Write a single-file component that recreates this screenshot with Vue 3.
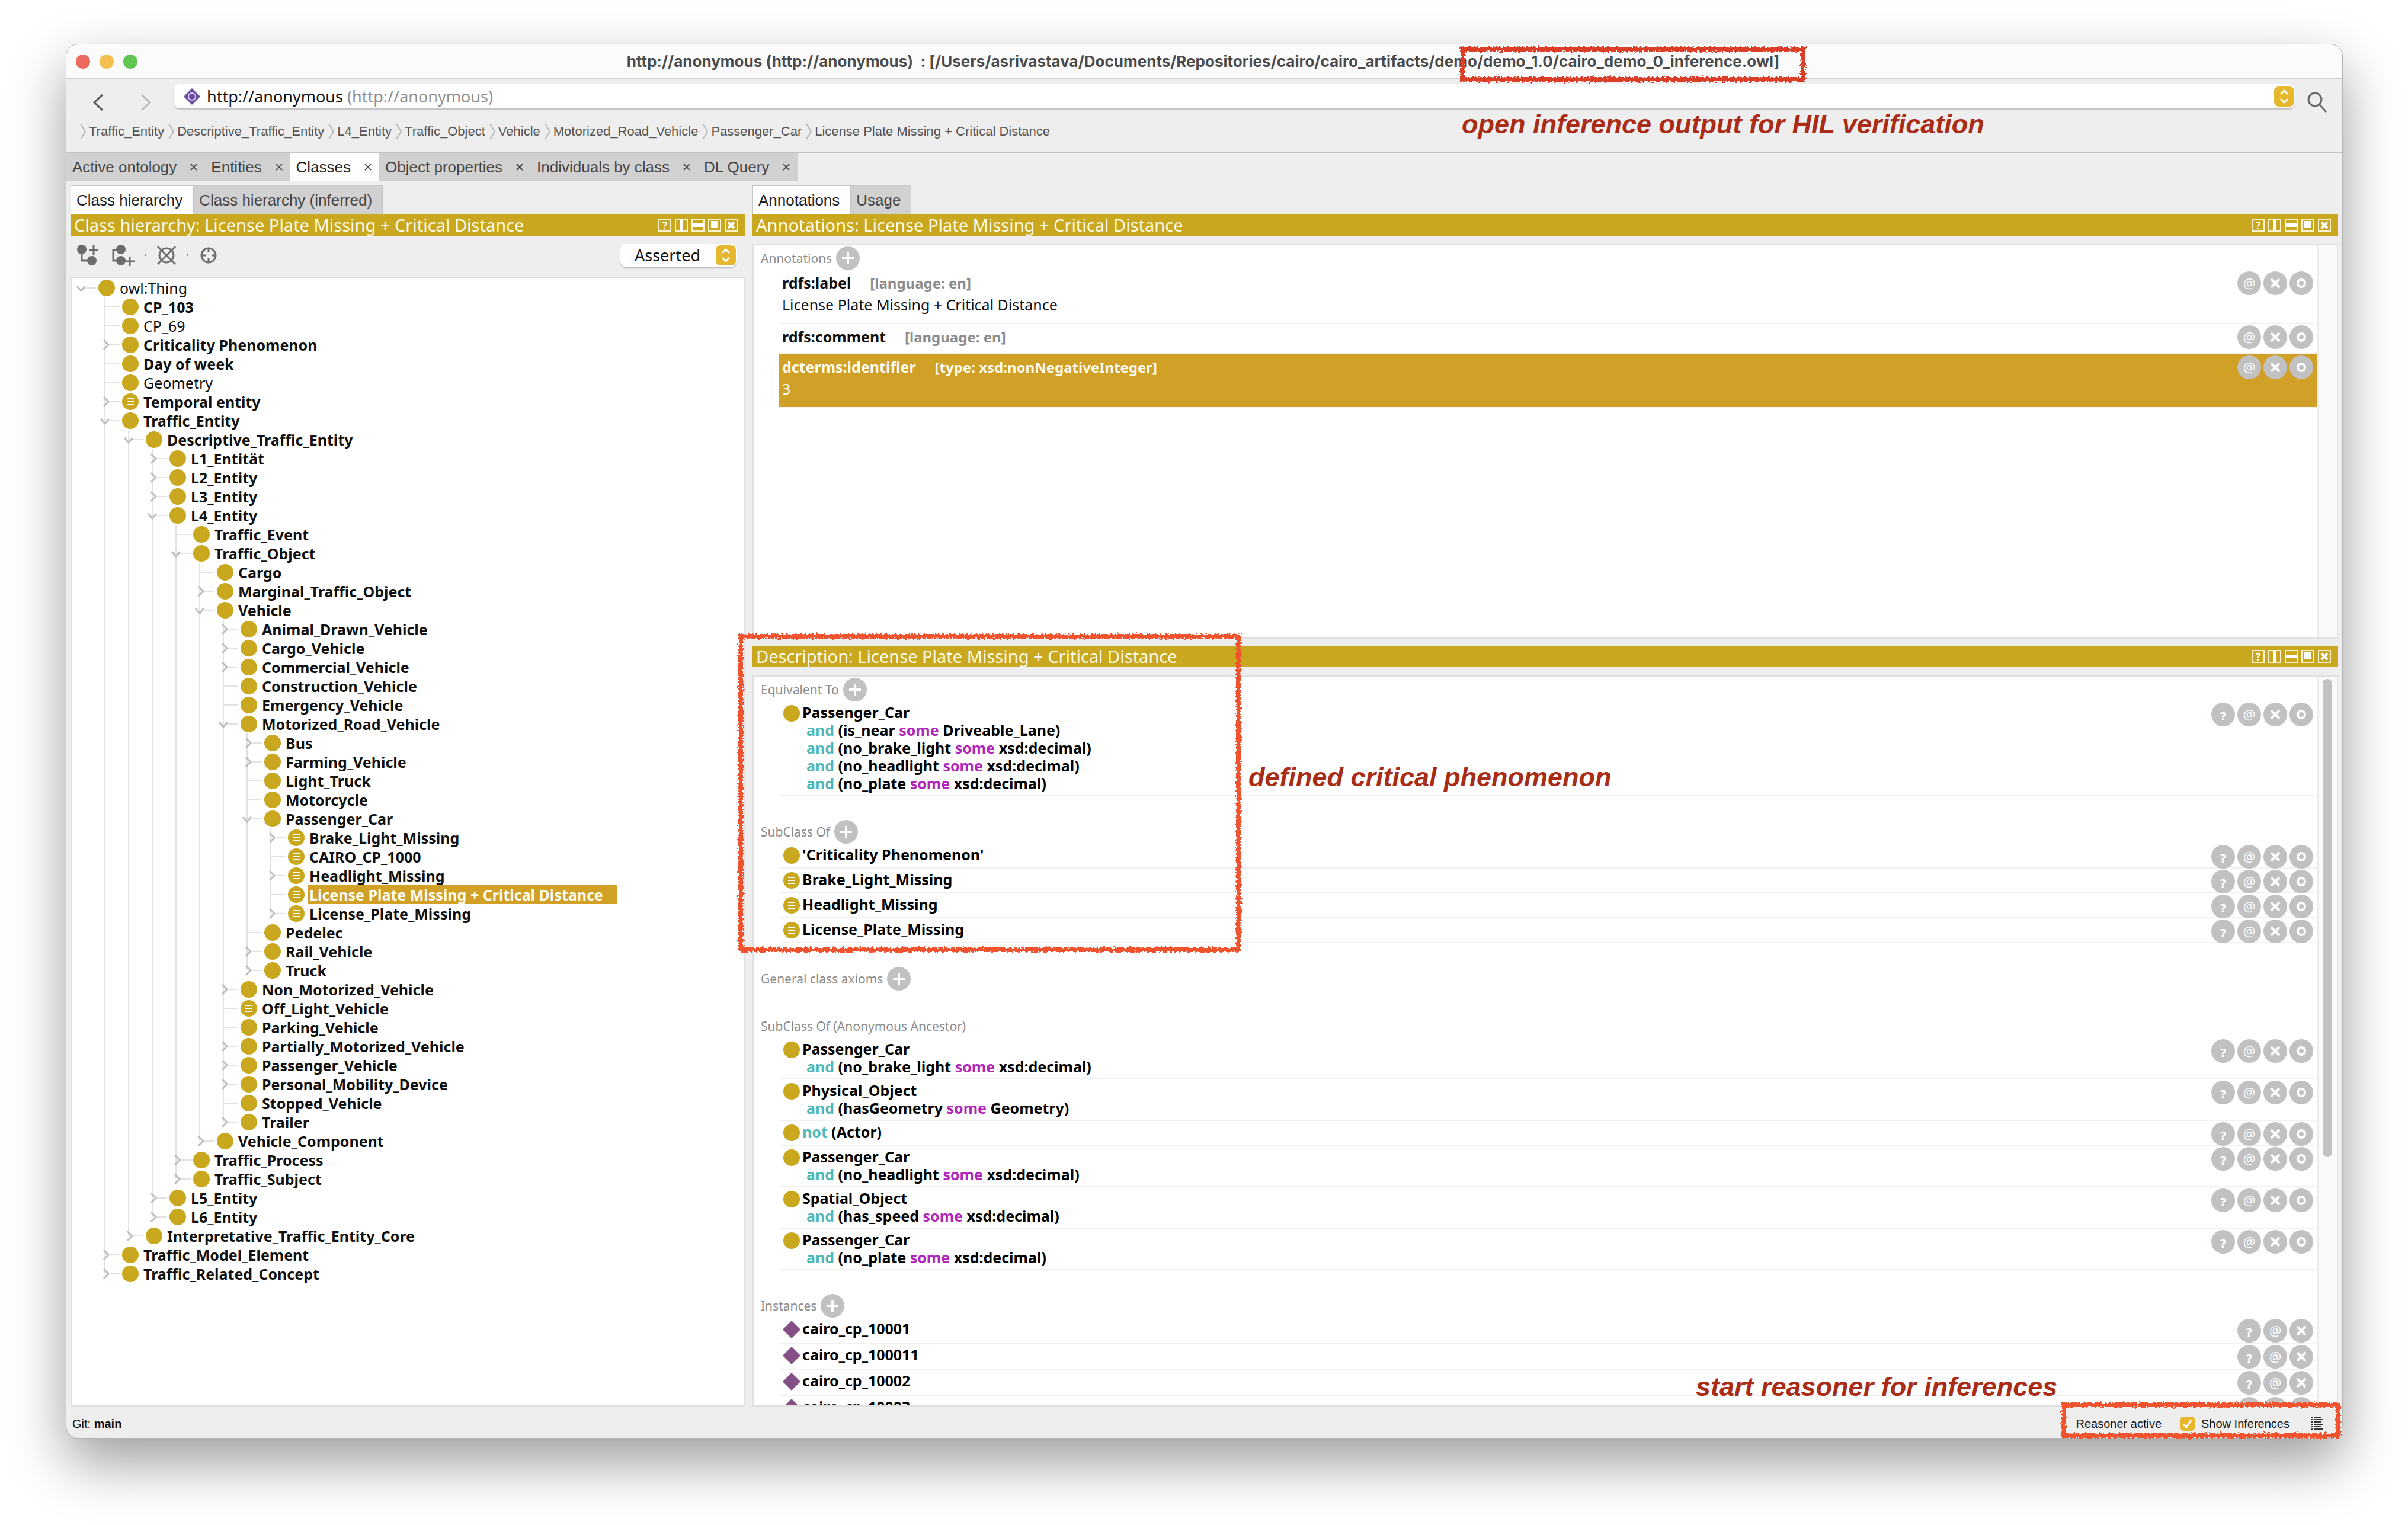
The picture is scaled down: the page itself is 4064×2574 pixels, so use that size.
<script setup>
import { ref } from 'vue'

// [level, label, state, flags]; state: '>' closed, 'v' open, '' leaf
// flags: n = normal weight, e = defined by equivalence, s = selected
const source = [
  [0, 'owl:Thing', 'v', 'n'],
  [1, 'CP_103', '', ''],
  [1, 'CP_69', '', 'n'],
  [1, 'Criticality Phenomenon', '>', ''],
  [1, 'Day of week', '', ''],
  [1, 'Geometry', '', 'n'],
  [1, 'Temporal entity', '>', 'e'],
  [1, 'Traffic_Entity', 'v', ''],
  [2, 'Descriptive_Traffic_Entity', 'v', ''],
  [3, 'L1_Entität', '>', ''],
  [3, 'L2_Entity', '>', ''],
  [3, 'L3_Entity', '>', ''],
  [3, 'L4_Entity', 'v', ''],
  [4, 'Traffic_Event', '', ''],
  [4, 'Traffic_Object', 'v', ''],
  [5, 'Cargo', '', ''],
  [5, 'Marginal_Traffic_Object', '>', ''],
  [5, 'Vehicle', 'v', ''],
  [6, 'Animal_Drawn_Vehicle', '>', ''],
  [6, 'Cargo_Vehicle', '>', ''],
  [6, 'Commercial_Vehicle', '>', ''],
  [6, 'Construction_Vehicle', '', ''],
  [6, 'Emergency_Vehicle', '', ''],
  [6, 'Motorized_Road_Vehicle', 'v', ''],
  [7, 'Bus', '>', ''],
  [7, 'Farming_Vehicle', '>', ''],
  [7, 'Light_Truck', '', ''],
  [7, 'Motorcycle', '', ''],
  [7, 'Passenger_Car', 'v', ''],
  [8, 'Brake_Light_Missing', '>', 'e'],
  [8, 'CAIRO_CP_1000', '', 'e'],
  [8, 'Headlight_Missing', '>', 'e'],
  [8, 'License Plate Missing + Critical Distance', '', 'es'],
  [8, 'License_Plate_Missing', '>', 'e'],
  [7, 'Pedelec', '', ''],
  [7, 'Rail_Vehicle', '>', ''],
  [7, 'Truck', '>', ''],
  [6, 'Non_Motorized_Vehicle', '>', ''],
  [6, 'Off_Light_Vehicle', '', 'e'],
  [6, 'Parking_Vehicle', '', ''],
  [6, 'Partially_Motorized_Vehicle', '>', ''],
  [6, 'Passenger_Vehicle', '>', ''],
  [6, 'Personal_Mobility_Device', '>', ''],
  [6, 'Stopped_Vehicle', '', ''],
  [6, 'Trailer', '>', ''],
  [5, 'Vehicle_Component', '>', ''],
  [4, 'Traffic_Process', '>', ''],
  [4, 'Traffic_Subject', '>', ''],
  [3, 'L5_Entity', '>', ''],
  [3, 'L6_Entity', '>', ''],
  [2, 'Interpretative_Traffic_Entity_Core', '>', ''],
  [1, 'Traffic_Model_Element', '>', ''],
  [1, 'Traffic_Related_Concept', '>', '']
]

function continues(index, depth) {
  for (let i = index + 1; i < source.length; i++) {
    if (source[i][0] < depth) return false
    if (source[i][0] === depth) return true
  }
  return false
}

const rows = source.map(([level, label, state, flags], index) => {
  const cells = []
  for (let d = 0; d <= level; d++) {
    const own = d === level
    const more = d > 0 && continues(index, d)
    let path = ''
    if (more) path += 'M16 0V32'
    else if (own && d > 0) path += 'M16 0V16'
    if (own) path += state ? 'M24 16H41' : 'M16 16H41'
    cells.push({ path, arrow: own ? state : '' })
  }
  return {
    label,
    level,
    cells,
    plain: flags.includes('n'),
    defined: flags.includes('e'),
    selected: flags.includes('s')
  }
})

const crumbs = ['Traffic_Entity', 'Descriptive_Traffic_Entity', 'L4_Entity', 'Traffic_Object', 'Vehicle', 'Motorized_Road_Vehicle', 'Passenger_Car', 'License Plate Missing + Critical Distance']
const tabs = ['Active ontology', 'Entities', 'Classes', 'Object properties', 'Individuals by class', 'DL Query']
const activeTab = ref('Classes')
const windowTools = ['help', 'columns', 'rows', 'maximise', 'close']

const annotations = [
  { prop: 'rdfs:label', meta: '[language: en]', value: 'License Plate Missing + Critical Distance' },
  { prop: 'rdfs:comment', meta: '[language: en]', value: '' },
  { prop: 'dcterms:identifier', meta: '[type: xsd:nonNegativeInteger]', value: '3', selected: true }
]

const full = ['?', '@', 'x', 'o']
const sections = [
  {
    title: 'Equivalent To', add: true, tools: full,
    items: [{ icon: 'class', name: 'Passenger_Car', and: [['is_near', 'Driveable_Lane'], ['no_brake_light', 'xsd:decimal'], ['no_headlight', 'xsd:decimal'], ['no_plate', 'xsd:decimal']] }]
  },
  {
    title: 'SubClass Of', add: true, tools: full,
    items: [
      { icon: 'class', name: "'Criticality Phenomenon'" },
      { icon: 'defined', name: 'Brake_Light_Missing' },
      { icon: 'defined', name: 'Headlight_Missing' },
      { icon: 'defined', name: 'License_Plate_Missing' }
    ]
  },
  { title: 'General class axioms', add: true, tools: full, items: [] },
  {
    title: 'SubClass Of (Anonymous Ancestor)', add: false, tools: full,
    items: [
      { icon: 'class', name: 'Passenger_Car', and: [['no_brake_light', 'xsd:decimal']] },
      { icon: 'class', name: 'Physical_Object', and: [['hasGeometry', 'Geometry']] },
      { icon: 'class', not: true, name: '(Actor)' },
      { icon: 'class', name: 'Passenger_Car', and: [['no_headlight', 'xsd:decimal']] },
      { icon: 'class', name: 'Spatial_Object', and: [['has_speed', 'xsd:decimal']] },
      { icon: 'class', name: 'Passenger_Car', and: [['no_plate', 'xsd:decimal']] }
    ]
  },
  {
    title: 'Instances', add: true, tools: ['?', '@', 'x'], instances: true,
    items: ['cairo_cp_10001', 'cairo_cp_100011', 'cairo_cp_10002', 'cairo_cp_10003'].map(name => ({ icon: 'individual', name }))
  }
]

const view = ref('Asserted')
const showInferences = ref(true)
const toolNames = { '?': 'Explain', '@': 'Annotate', x: 'Delete', o: 'Edit' }
</script>

<template>
  <div class="stage">
    <svg class="defs" aria-hidden="true">
      <filter id="brush" x="-5%" y="-20%" width="110%" height="140%">
        <feTurbulence type="fractalNoise" baseFrequency="0.25" numOctaves="3" seed="4" result="noise" />
        <feDisplacementMap in="SourceGraphic" in2="noise" scale="9" xChannelSelector="R" yChannelSelector="G" />
      </filter>
    </svg>

    <main class="window">
      <header class="titlebar">
        <div class="lights">
          <button class="light red" aria-label="Close"></button>
          <button class="light amber" aria-label="Minimise"></button>
          <button class="light green" aria-label="Zoom"></button>
        </div>
        <h1 class="title">http://anonymous (http://anonymous)&nbsp; : [/Users/asrivastava/Documents/Repositories/cairo/cairo_artifacts/demo/demo_1.0/cairo_demo_0_inference.owl]</h1>
      </header>

      <div class="navigation">
        <div class="location">
          <button class="nav back" aria-label="Back">
            <svg width="20" height="32" viewBox="0 0 20 32"><path d="M17 3 3 16 17 29" /></svg>
          </button>
          <button class="nav forward" aria-label="Forward">
            <svg width="20" height="32" viewBox="0 0 20 32"><path d="M3 3 17 16 3 29" /></svg>
          </button>
          <button class="address">
            <svg width="28" height="28" viewBox="0 0 28 28">
              <path d="M14 0 28 14 14 28 0 14Z" fill="#6a4ba3" />
              <circle cx="14" cy="14" r="6" fill="#6a4ba3" stroke="#d8cdea" stroke-width="2" />
            </svg>
            <span>http://anonymous <span class="dim">(http://anonymous)</span></span>
            <svg class="knob" width="34" height="34" viewBox="0 0 34 34">
              <rect width="34" height="34" rx="8" /><path d="M11 13 17 7 23 13M11 21 17 27 23 21" />
            </svg>
          </button>
          <button class="search" aria-label="Search">
            <svg width="36" height="38" viewBox="0 0 36 38"><circle cx="14" cy="14" r="11" /><path d="M22 23 33 35" stroke-width="5" /></svg>
          </button>
        </div>
        <nav class="crumbs" aria-label="Ancestors">
          <template v-for="c in crumbs" :key="c">
            <svg width="10" height="28" viewBox="0 0 10 28"><path d="M1 1 9 14 1 27" /></svg>
            <a href="#">{{ c }}</a>
          </template>
        </nav>
      </div>

      <nav class="tabs">
        <div v-for="t in tabs" :key="t" class="tab" :class="{ active: t === activeTab }">
          <button class="tab-name" @click="activeTab = t">{{ t }}</button>
          <button class="tab-close" :aria-label="'Close ' + t">
            <svg width="14" height="14" viewBox="0 0 14 14"><path d="M2 2 12 12M12 2 2 12" /></svg>
          </button>
        </div>
      </nav>

      <div class="workspace">
        <section class="column">
          <div class="subtabs">
            <button class="subtab active">Class hierarchy</button>
            <button class="subtab">Class hierarchy (inferred)</button>
          </div>
          <div class="bar">
            <h2>Class hierarchy: License Plate Missing + Critical Distance</h2>
            <div class="bar-tools">
              <button v-for="w in windowTools" :key="w" class="bar-tool" :aria-label="w">
                <span v-if="w === 'help'">?</span>
                <svg v-else width="22" height="22" viewBox="0 0 22 22">
                  <path v-if="w === 'columns'" d="M8 1H14V21H8Z" />
                  <path v-if="w === 'rows'" d="M1 8H21V14H1Z" />
                  <path v-if="w === 'maximise'" d="M5 4H17V16H5Z" />
                  <path v-if="w === 'close'" class="cross" d="M6 6 16 16M16 6 6 16" />
                </svg>
              </button>
            </div>
          </div>
          <div class="tree-tools">
            <button aria-label="Add subclass">
              <svg width="40" height="38" viewBox="0 0 40 38">
                <circle cx="11" cy="9" r="8" /><circle cx="28" cy="28" r="8" />
                <path d="M11 9V28H26M31 2V18M23 10H39" />
              </svg>
            </button>
            <button class="second" aria-label="Add sibling class">
              <svg width="40" height="38" viewBox="0 0 40 38">
                <circle cx="16" cy="9" r="8" /><circle cx="16" cy="28" r="8" />
                <path d="M14 10H3V28H14M31 21V37M23 29H39" />
              </svg>
            </button>
            <i class="dot"></i>
            <button class="third" aria-label="Delete class">
              <svg width="34" height="34" viewBox="0 0 34 34"><circle class="ring" cx="17" cy="17" r="12" /><path d="M2 2 32 32M32 2 2 32" /></svg>
            </button>
            <i class="dot"></i>
            <button class="fourth" aria-label="Locate class">
              <svg width="34" height="34" viewBox="0 0 34 34"><circle class="ring" cx="17" cy="17" r="12" /><path d="M17 5V12M17 22V29M5 17H12M22 17H29" /></svg>
            </button>
            <label class="mode">
              <select v-model="view" aria-label="Hierarchy mode">
                <option>Asserted</option>
                <option>Inferred</option>
              </select>
              <svg class="knob" width="34" height="34" viewBox="0 0 34 34">
                <rect width="34" height="34" rx="8" /><path d="M11 13 17 7 23 13M11 21 17 27 23 21" />
              </svg>
            </label>
          </div>
          <ul class="tree panel" role="tree">
            <li v-for="r in rows" :key="r.label" class="node" role="treeitem" :aria-level="r.level + 1">
              <svg v-for="(c, i) in r.cells" :key="i" class="guide" width="40" height="32" viewBox="0 0 40 32">
                <path v-if="c.path" :d="c.path" />
                <path v-if="c.arrow === '>'" class="arrow" d="M14 8 22 16 14 24" />
                <path v-if="c.arrow === 'v'" class="arrow" d="M9 13 16 21 23 13" />
              </svg>
              <svg class="dot-icon" width="28" height="28" viewBox="0 0 28 28">
                <circle cx="14" cy="14" r="14" fill="#c9a71f" />
                <path v-if="r.defined" d="M8 9H20M8 14H20M8 19H20" stroke="#fff" stroke-width="2" />
              </svg>
              <span class="node-name" :class="{ plain: r.plain, selected: r.selected }">{{ r.label }}</span>
            </li>
          </ul>
        </section>

        <section class="column">
          <div class="subtabs">
            <button class="subtab active">Annotations</button>
            <button class="subtab">Usage</button>
          </div>
          <div class="bar">
            <h2>Annotations: License Plate Missing + Critical Distance</h2>
            <div class="bar-tools">
              <button v-for="w in windowTools" :key="w" class="bar-tool" :aria-label="w">
                <span v-if="w === 'help'">?</span>
                <svg v-else width="22" height="22" viewBox="0 0 22 22">
                  <path v-if="w === 'columns'" d="M8 1H14V21H8Z" />
                  <path v-if="w === 'rows'" d="M1 8H21V14H1Z" />
                  <path v-if="w === 'maximise'" d="M5 4H17V16H5Z" />
                  <path v-if="w === 'close'" class="cross" d="M6 6 16 16M16 6 6 16" />
                </svg>
              </button>
            </div>
          </div>
          <div class="panel scroller annotation-panel">
            <div class="content">
              <div class="section-head">
                <h3>Annotations</h3>
                <button class="round" aria-label="Add annotation">
                  <svg width="40" height="40" viewBox="0 0 40 40"><path d="M20 10V30M10 20H30" /></svg>
                </button>
              </div>
              <div v-for="a in annotations" :key="a.prop" class="annotation" :class="{ selected: a.selected }">
                <div class="annotation-text">
                  <p class="prop">{{ a.prop }}<span class="meta">{{ a.meta }}</span></p>
                  <p v-if="a.value">{{ a.value }}</p>
                </div>
                <div class="row-tools">
                  <button v-for="t in ['@', 'x', 'o']" :key="t" class="round" :aria-label="toolNames[t]">
                    <span v-if="t === '@'">@</span>
                    <svg v-else width="40" height="40" viewBox="0 0 40 40">
                      <path v-if="t === 'x'" d="M13 13 27 27M27 13 13 27" />
                      <circle v-else cx="20" cy="20" r="6" />
                    </svg>
                  </button>
                </div>
              </div>
            </div>
            <div class="track"></div>
          </div>

          <div class="bar lower">
            <h2>Description: License Plate Missing + Critical Distance</h2>
            <div class="bar-tools">
              <button v-for="w in windowTools" :key="w" class="bar-tool" :aria-label="w">
                <span v-if="w === 'help'">?</span>
                <svg v-else width="22" height="22" viewBox="0 0 22 22">
                  <path v-if="w === 'columns'" d="M8 1H14V21H8Z" />
                  <path v-if="w === 'rows'" d="M1 8H21V14H1Z" />
                  <path v-if="w === 'maximise'" d="M5 4H17V16H5Z" />
                  <path v-if="w === 'close'" class="cross" d="M6 6 16 16M16 6 6 16" />
                </svg>
              </button>
            </div>
          </div>
          <div class="panel scroller description-panel">
            <div class="content">
              <section v-for="s in sections" :key="s.title" class="axioms">
                <div class="section-head">
                  <h3>{{ s.title }}</h3>
                  <button v-if="s.add" class="round" :aria-label="'Add ' + s.title">
                    <svg width="40" height="40" viewBox="0 0 40 40"><path d="M20 10V30M10 20H30" /></svg>
                  </button>
                </div>
                <div v-for="(it, i) in s.items" :key="i" class="axiom" :class="{ instance: s.instances }">
                  <svg class="axiom-icon" width="30" height="30" viewBox="0 0 30 30">
                    <path v-if="it.icon === 'individual'" d="M15 0 30 15 15 30 0 15Z" fill="#834f86" />
                    <circle v-else cx="15" cy="15" r="14" fill="#c9a71f" />
                    <path v-if="it.icon === 'defined'" d="M9 10H21M9 15H21M9 20H21" stroke="#fff" stroke-width="2" />
                  </svg>
                  <div class="axiom-text">
                    <p><span v-if="it.not" class="logic">not </span>{{ it.name }}</p>
                    <p v-for="a in it.and" :key="a[0]" class="clause"><span class="logic">and</span> ({{ a[0] }} <span class="some">some</span> {{ a[1] }})</p>
                  </div>
                  <div class="row-tools">
                    <button v-for="t in s.tools" :key="t" class="round" :aria-label="toolNames[t]">
                      <span v-if="t === '@'">@</span>
                      <span v-else-if="t === '?'" class="query">?</span>
                      <svg v-else width="40" height="40" viewBox="0 0 40 40">
                        <path v-if="t === 'x'" d="M13 13 27 27M27 13 13 27" />
                        <circle v-else cx="20" cy="20" r="6" />
                      </svg>
                    </button>
                  </div>
                </div>
              </section>
            </div>
            <div class="track"><div class="thumb"></div></div>
          </div>
        </section>
      </div>

      <footer class="status">
        <span>Git: <b>main</b></span>
        <span class="reasoner">Reasoner active</span>
        <label class="inferences">
          <input v-model="showInferences" type="checkbox" />
          Show Inferences
        </label>
        <button class="log" aria-label="Log">
          <svg width="20" height="24" viewBox="0 0 20 24">
            <path d="M0 1H2M4 1H16M0 5H2M4 5H19M0 9H2M4 9H17M0 13H2M4 13H20M0 17H2M4 17H16M0 21H2M4 21H20" />
          </svg>
        </button>
      </footer>
    </main>

    <div class="mark file"></div>
    <div class="mark axiom-box"></div>
    <div class="mark reasoner-box"></div>
    <p class="note note-file">open inference output for HIL verification</p>
    <p class="note note-axioms">defined critical phenomenon</p>
    <p class="note note-reasoner">start reasoner for inferences</p>
  </div>
</template>

<style>
body {
  margin: 0;
  background: #fff;
}
</style>

<style scoped>
* {
  box-sizing: border-box;
}
p, h1, h2, h3, ul {
  margin: 0;
  padding: 0;
}
svg {
  display: block;
  flex: none;
}
button {
  margin: 0;
  padding: 0;
  border: 0;
  background: none;
  font: inherit;
  color: inherit;
  text-align: left;
}
.stage {
  position: relative;
  display: flex;
  height: 100vh;
  padding: 75px 111px 147px 112px;
  overflow: hidden;
  font-family: "Noto Sans", "Open Sans", sans-serif;
  font-size: 25px;
  color: #111;
}
.defs {
  position: absolute;
  width: 0;
  height: 0;
}
.window {
  display: flex;
  flex: 1;
  flex-direction: column;
  min-width: 0;
  overflow: hidden;
  border-radius: 20px;
  background: #eee;
  box-shadow: 0 0 0 1px #b4b4b4, 0 40px 96px rgba(0, 0, 0, 0.4);
}

/* title bar */
.titlebar {
  display: grid;
  grid-template-columns: 1fr auto 1fr;
  align-items: center;
  height: 59px;
  padding: 0 20px 0 16px;
  border-bottom: 2px solid #d0d0d0;
  background: #fbfbfb;
}
.lights {
  display: flex;
  gap: 16px;
}
.light {
  width: 24px;
  height: 24px;
  border-radius: 50%;
}
.red { background: #ec6a5e; }
.amber { background: #f4bf4f; }
.green { background: #61c554; }
.title {
  font: 700 26px/32px Inter, "Liberation Sans", sans-serif;
  color: #4b4b4b;
  white-space: pre;
}

/* location */
.navigation {
  height: 122px;
  padding: 8px 24px 0 23px;
}
.location {
  display: flex;
  align-items: flex-start;
}
.nav {
  padding-top: 15px;
  margin-right: 60px;
}
.nav path {
  fill: none;
  stroke: #555;
  stroke-width: 3;
}
.back { margin-left: 21px; }
.forward { margin-right: 37px; }
.forward path { stroke: #b9b9b9; }
.address {
  display: flex;
  flex: 1;
  align-items: center;
  gap: 11px;
  height: 41px;
  padding: 0 1px 0 17px;
  border-radius: 10px;
  background: #fff;
  box-shadow: 0 2px 2px #bdbdbd;
  font-size: 27px;
}
.dim { color: #8f8f8f; }
.address .knob { margin-left: auto; }
.knob rect { fill: #e7b82e; }
.knob path {
  fill: none;
  stroke: #fff;
  stroke-width: 3;
}
.search {
  padding-top: 12px;
  margin-left: 20px;
}
.search circle, .search path {
  fill: none;
  stroke: #666;
  stroke-width: 3;
}
.crumbs {
  display: flex;
  align-items: center;
  height: 32px;
  margin-top: 14px;
  font: 22px/32px "Liberation Sans", sans-serif;
}
.crumbs svg path {
  fill: none;
  stroke: #b5b5b5;
  stroke-width: 2;
}
.crumbs a {
  margin: 0 7px 0 5px;
  color: #555;
  text-decoration: none;
}

/* tabs */
.tabs {
  display: flex;
  height: 50px;
  border-top: 2px solid #c4c4c4;
  font: 26px/48px "Liberation Sans", sans-serif;
  color: #444;
}
.tab {
  display: flex;
  align-items: center;
  padding: 0 12px 0 10px;
  background: #d1d1d1;
}
.tab.active, .subtab.active {
  background: #fff;
  color: #222;
}
.tab-close { margin-left: 22px; }
.tab-close path {
  stroke: #444;
  stroke-width: 2;
}
.workspace {
  display: grid;
  flex: 1;
  grid-template-columns: minmax(0, 1138fr) minmax(0, 2676fr);
  gap: 13px;
  min-height: 0;
  padding: 6px 7px 0;
}
.column {
  display: flex;
  flex-direction: column;
  min-width: 0;
  min-height: 0;
}
.subtabs {
  display: flex;
  height: 50px;
}
.subtab {
  padding: 0 17px 0 9px;
  border: 2px solid #c6c6c6;
  border-width: 2px 1px 0;
  background: #d1d1d1;
  font: 26px/46px "Liberation Sans", sans-serif;
  color: #444;
}

/* view headers */
.bar {
  display: flex;
  flex: none;
  align-items: center;
  justify-content: space-between;
  height: 36px;
  padding: 0 12px 0 6px;
  background: #c9a71f;
}
.bar h2 {
  font-size: 29px;
  font-weight: 400;
  line-height: 36px;
  color: #fffbe6;
  white-space: nowrap;
}
.bar-tools {
  display: flex;
  gap: 6px;
}
.bar-tool {
  display: flex;
  align-items: center;
  justify-content: center;
  width: 22px;
  height: 22px;
  border: 2px solid #fbf3cf;
  font: 700 18px/18px "Open Sans", sans-serif;
  color: #fff;
}
.bar-tool path { fill: #fff; }
.bar-tool .cross {
  stroke: #fff;
  stroke-width: 4;
}
.panel {
  min-height: 0;
  overflow: hidden;
  border: 2px solid #e0e0e0;
  background: #fff;
}

/* class tree */
.tree-tools {
  display: flex;
  align-items: center;
  height: 69px;
  padding: 0 14px 4px 8px;
}
.tree-tools circle { fill: #6c6c6c; }
.tree-tools .ring, .tree-tools button path {
  fill: none;
  stroke: #6c6c6c;
  stroke-width: 3;
}
.second { margin: 0 16px 0 21px; }
.third, .fourth { margin: 0 17px; }
.dot {
  width: 3px;
  height: 3px;
  background: #888;
}
.mode {
  position: relative;
  display: flex;
  margin-left: auto;
}
.mode select {
  width: 196px;
  height: 40px;
  padding: 0 24px;
  border: 0;
  border-radius: 10px;
  background: #fff;
  box-shadow: 0 2px 2px #bdbdbd;
  appearance: none;
  font: 27px/40px "Noto Sans", sans-serif;
  color: #111;
}
.mode .knob {
  position: absolute;
  top: 3px;
  right: 1px;
  pointer-events: none;
}
.tree {
  flex: 1;
  padding-top: 1px;
  list-style: none;
}
.node {
  display: flex;
  align-items: center;
  height: 32px;
}
.guide { overflow: visible; }
.guide path {
  fill: none;
  stroke: #e2e2e2;
  stroke-width: 2;
}
.guide .arrow {
  stroke: #bdbdbd;
  stroke-width: 3;
}
.dot-icon { margin: 0 6px 0 5px; }
.node-name {
  padding: 0 24px 0 2px;
  font-weight: 700;
  line-height: 32px;
  white-space: nowrap;
}
.plain { font-weight: 400; }
.node-name.selected {
  background: #d0a027;
  color: #fffdf0;
}

/* right column panels */
.scroller {
  display: flex;
  margin-top: 14px;
}
.annotation-panel { flex: 665 1 0; }
.description-panel { flex: 1235 1 0; }
.lower { margin-top: 12px; }
.content {
  flex: 1;
  min-width: 0;
  padding: 2px 0 0 12px;
}
.track {
  width: 33px;
  padding: 4px 7px;
  border-left: 2px solid #ececec;
  background: #fafafa;
}
.thumb {
  width: 16px;
  height: 66%;
  border-radius: 8px;
  background: #c2c2c2;
}
.section-head {
  display: flex;
  align-items: center;
  gap: 7px;
  height: 40px;
}
.section-head h3 {
  font-size: 21px;
  font-weight: 400;
  line-height: 40px;
  color: #8c8c8c;
}
.round {
  display: flex;
  flex: none;
  align-items: center;
  justify-content: center;
  width: 40px;
  height: 40px;
  border-radius: 50%;
  background: #c1c1c1;
  font: 23px/40px "Open Sans", sans-serif;
  color: #fff;
}
.round path, .round circle {
  fill: none;
  stroke: #fff;
  stroke-width: 4;
}
.query {
  padding-top: 6px;
  font: 700 20px/40px "DejaVu Sans", sans-serif;
}
.row-tools {
  display: flex;
  flex: none;
  gap: 4px;
  height: 40px;
  margin: 2px 7px -2px auto;
}
.annotation {
  display: flex;
  min-height: 50px;
  margin-left: 30px;
  border-bottom: 2px solid #f1f1f1;
}
.annotation-text {
  padding: 3px 0 13px 6px;
  line-height: 36px;
}
.prop { font-weight: 700; }
.meta {
  margin-left: 32px;
  font-size: 24px;
  color: #8c8c8c;
}
.annotation:nth-child(3) .annotation-text { padding-bottom: 9px; }
.annotation.selected, .annotation.selected .meta {
  background: #d0a027;
  color: #fffdf0;
}
.axioms { margin-bottom: 40px; }
.axiom {
  display: flex;
  min-height: 42px;
  margin-left: 30px;
  border-bottom: 2px solid #f1f1f1;
}
.instance { min-height: 44px; }
.axiom-icon { margin: 5px 3px 0 7px; }
.axiom-text {
  padding: 3px 0 5px;
  font-weight: 700;
  line-height: 30px;
  color: #000;
}
.clause { margin-left: 7px; }
.logic { color: #4fb8b8; }
.some { color: #b125bb; }

/* status bar */
.status {
  display: flex;
  align-items: center;
  height: 53px;
  padding: 4px 32px 0 10px;
  font: 20px/24px "Liberation Sans", sans-serif;
}
.reasoner { margin-left: auto; }
.inferences {
  display: flex;
  align-items: center;
  gap: 11px;
  margin: 0 37px 0 32px;
}
.inferences input {
  width: 24px;
  height: 24px;
  margin: 0;
  border-radius: 5px;
  appearance: none;
  background: #e7b82e url("data:image/svg+xml,%3Csvg xmlns='http://www.w3.org/2000/svg' viewBox='0 0 24 24'%3E%3Cpath d='M5 13l5 5L18 6' fill='none' stroke='white' stroke-width='3'/%3E%3C/svg%3E");
}
.log path {
  stroke: #333;
  stroke-width: 2;
}

/* reviewer's notes over the window */
.mark {
  position: absolute;
  border: 8px solid #f0532d;
  filter: url(#brush);
  pointer-events: none;
}
.file {
  top: 79px;
  left: 2464px;
  width: 583px;
  height: 59px;
  border-color: #dc3c26;
}
.axiom-box {
  top: 1070px;
  left: 1246px;
  width: 848px;
  height: 537px;
}
.reasoner-box {
  top: 2367px;
  left: 3479px;
  width: 471px;
  height: 60px;
}
.note {
  position: absolute;
  font: italic 700 45px/52px "Liberation Sans", sans-serif;
  color: #aa2c17;
  white-space: nowrap;
}
.note-file {
  top: 184px;
  left: 2467px;
}
.note-axioms {
  top: 1286px;
  left: 2107px;
}
.note-reasoner {
  top: 2315px;
  left: 2862px;
}
</style>
